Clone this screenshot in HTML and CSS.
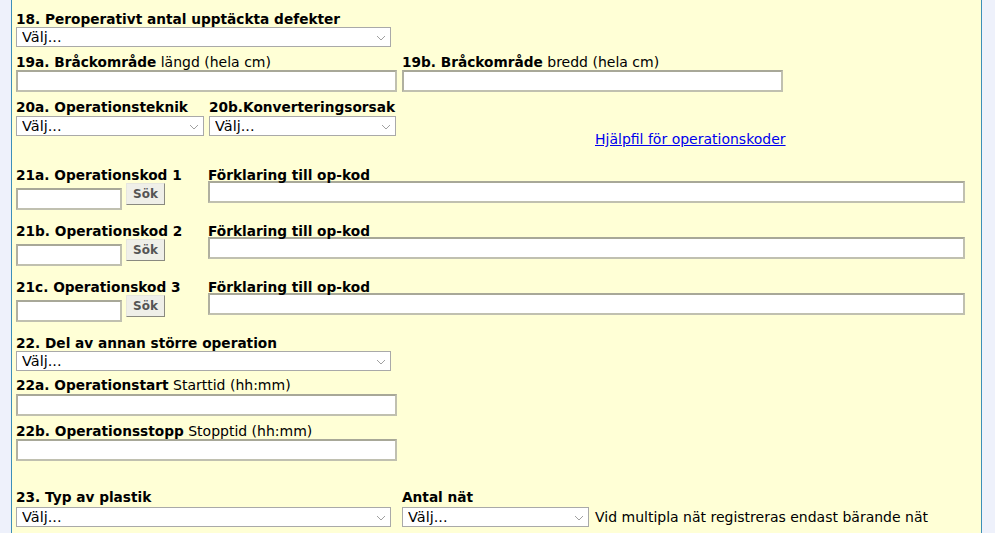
FILE: index.html
```html
<!DOCTYPE html>
<html lang="sv">
<head>
<meta charset="utf-8">
<title>Formulär</title>
<link rel="stylesheet" href="styles.css">
</head>
<body>
<div class="panel">
  <div class="field">
    <div class="lbl"><b>18. Peroperativt antal upptäckta defekter</b></div>
    <span class="sel w375"><select><option>Välj...</option></select><svg class="chev" width="10" height="6" viewBox="0 0 10 6"><path d="M1 1 L5 5 L9 1" fill="none" stroke="#a0a0a0" stroke-width="1"/></svg></span>
  </div>

  <div class="row r19">
    <div class="field">
      <div class="lbl"><b>19a. Bråckområde</b> längd (hela cm)</div>
      <input class="txt w381" type="text">
    </div>
    <div class="field">
      <div class="lbl"><b>19b. Bråckområde</b> bredd (hela cm)</div>
      <input class="txt w381" type="text">
    </div>
  </div>

  <div class="row r20">
    <div class="field c20a">
      <div class="lbl"><b>20a. Operationsteknik</b></div>
      <span class="sel w188"><select><option>Välj...</option></select><svg class="chev" width="10" height="6" viewBox="0 0 10 6"><path d="M1 1 L5 5 L9 1" fill="none" stroke="#a0a0a0" stroke-width="1"/></svg></span>
    </div>
    <div class="field">
      <div class="lbl"><b>20b.Konverteringsorsak</b></div>
      <span class="sel w187"><select><option>Välj...</option></select><svg class="chev" width="10" height="6" viewBox="0 0 10 6"><path d="M1 1 L5 5 L9 1" fill="none" stroke="#a0a0a0" stroke-width="1"/></svg></span>
    </div>
  </div>

  <div class="linkrow"><a href="#">Hjälpfil för operationskoder</a></div>

  <div class="row oprow first">
    <div class="field codecell">
      <div class="lbl"><b>21a. Operationskod 1</b></div>
      <div class="codeline"><input class="txt code" type="text"><button class="btn" type="button">Sök</button></div>
    </div>
    <div class="field">
      <div class="lbl"><b>Förklaring till op-kod</b></div>
      <input class="txt w757" type="text">
    </div>
  </div>

  <div class="row oprow">
    <div class="field codecell">
      <div class="lbl"><b>21b. Operationskod 2</b></div>
      <div class="codeline"><input class="txt code" type="text"><button class="btn" type="button">Sök</button></div>
    </div>
    <div class="field">
      <div class="lbl"><b>Förklaring till op-kod</b></div>
      <input class="txt w757" type="text">
    </div>
  </div>

  <div class="row oprow">
    <div class="field codecell">
      <div class="lbl"><b>21c. Operationskod 3</b></div>
      <div class="codeline"><input class="txt code" type="text"><button class="btn" type="button">Sök</button></div>
    </div>
    <div class="field">
      <div class="lbl"><b>Förklaring till op-kod</b></div>
      <input class="txt w757" type="text">
    </div>
  </div>

  <div class="field r22">
    <div class="lbl"><b>22. Del av annan större operation</b></div>
    <span class="sel w375"><select><option>Välj...</option></select><svg class="chev" width="10" height="6" viewBox="0 0 10 6"><path d="M1 1 L5 5 L9 1" fill="none" stroke="#a0a0a0" stroke-width="1"/></svg></span>
  </div>

  <div class="field r22a">
    <div class="lbl"><b>22a. Operationstart</b> Starttid (hh:mm)</div>
    <input class="txt w381" type="text">
  </div>

  <div class="field r22b">
    <div class="lbl"><b>22b. Operationsstopp</b> Stopptid (hh:mm)</div>
    <input class="txt w381" type="text">
  </div>

  <div class="row r23">
    <div class="field c23">
      <div class="lbl"><b>23. Typ av plastik</b></div>
      <span class="sel w375"><select><option>Välj...</option></select><svg class="chev" width="10" height="6" viewBox="0 0 10 6"><path d="M1 1 L5 5 L9 1" fill="none" stroke="#a0a0a0" stroke-width="1"/></svg></span>
    </div>
    <div class="field">
      <div class="lbl"><b>Antal nät</b></div>
      <div class="natline">
        <span class="sel w187"><select><option>Välj...</option></select><svg class="chev" width="10" height="6" viewBox="0 0 10 6"><path d="M1 1 L5 5 L9 1" fill="none" stroke="#a0a0a0" stroke-width="1"/></svg></span>
        <span class="note">Vid multipla nät registreras endast bärande nät</span>
      </div>
    </div>
  </div>
</div>
</body>
</html>
```

FILE: styles.css
```css
html, body {
  margin: 0;
  padding: 0;
  background: #eef1fb;
  height: 100%;
}
body {
  font-family: "DejaVu Sans", Verdana, sans-serif;
  font-size: 14px;
  color: #000;
  overflow: hidden;
}
.panel {
  margin-left: 11px;
  width: 971px;
  min-height: 533px;
  background: #ffffd6;
  border-left: 1px solid #3d8fb8;
  border-right: 1px solid #3d8fb8;
  padding: 10px 0 0 4px;
  box-sizing: border-box;
}
.lbl {
  line-height: 18px;
  height: 16px;
  white-space: nowrap;
  font-size: 14px;
}
.lbl b {
  font-weight: bold;
  font-size: 13.7px;
}
.field { display: block; }
.row { display: flex; }
.sel {
  position: relative;
  display: block;
  height: 20px;
  margin-top: 1px;
}
.sel select {
  appearance: none;
  -webkit-appearance: none;
  width: 100%;
  height: 20px;
  box-sizing: border-box;
  border: 1px solid #a9a9a9;
  background: #fff;
  font-family: inherit;
  font-size: 14.5px;
  color: #000;
  padding: 0 0 0 5px;
  margin: 0;
  border-radius: 0;
  outline: none;
}
.chev {
  position: absolute;
  right: 5px;
  top: 8px;
  pointer-events: none;
}
.w375 { width: 375px; }
.w188 { width: 188px; }
.w187 { width: 187px; }
.txt {
  display: block;
  height: 22px;
  box-sizing: border-box;
  border: 2px solid #c0c0b0;
  border-top-color: #a8a898;
  border-left-color: #b0b0a0;
  background: #fff;
  margin: 1px 0 0 0;
  padding: 0 2px;
  font-family: inherit;
  font-size: 14px;
  outline: none;
  border-radius: 0;
}
.w381 { width: 381px; }
.w757 { width: 757px; }
.r19 { margin-top: 6px; gap: 5px; }
.r20 { margin-top: 6px; }
.c20a { width: 193px; }
.r20 .sel { margin-top: 2px; }
.linkrow {
  height: 16px;
  line-height: 16px;
  margin-top: -5px;
  padding-left: 579px;
  font-size: 14px;
}
.linkrow a {
  color: #0000ee;
  text-decoration: underline;
}
.oprow.first { margin-top: 19px; }
.oprow + .oprow { margin-top: 12px; }
.codecell { width: 192px; }
.codeline {
  display: flex;
  align-items: flex-start;
}
.codeline .code {
  width: 106px;
  margin-top: 6px;
}
.oprow .w757 { margin-top: -1px; }
.btn {
  width: 39px;
  height: 22px;
  margin: 1px 0 0 4px;
  padding: 0;
  box-sizing: border-box;
  background: #efefe8;
  border: 1px solid #e6e6de;
  border-right-color: #8a8a80;
  border-bottom-color: #8a8a80;
  font-family: inherit;
  font-size: 12px;
  font-weight: bold;
  color: #555;
  border-radius: 0;
}
.r22 { margin-top: 12px; }
.r22a { margin-top: 5px; }
.r22a .txt { margin-top: 2px; }
.r22b { margin-top: 6px; }
.r22b .txt { margin-top: 1px; }
.r23 { margin-top: 27px; }
.c23 { width: 386px; }
.r23 .sel { margin-top: 3px; }
.natline {
  display: flex;
  align-items: center;
  gap: 6px;
}
.note { white-space: nowrap; margin-top: 3px; }
```
